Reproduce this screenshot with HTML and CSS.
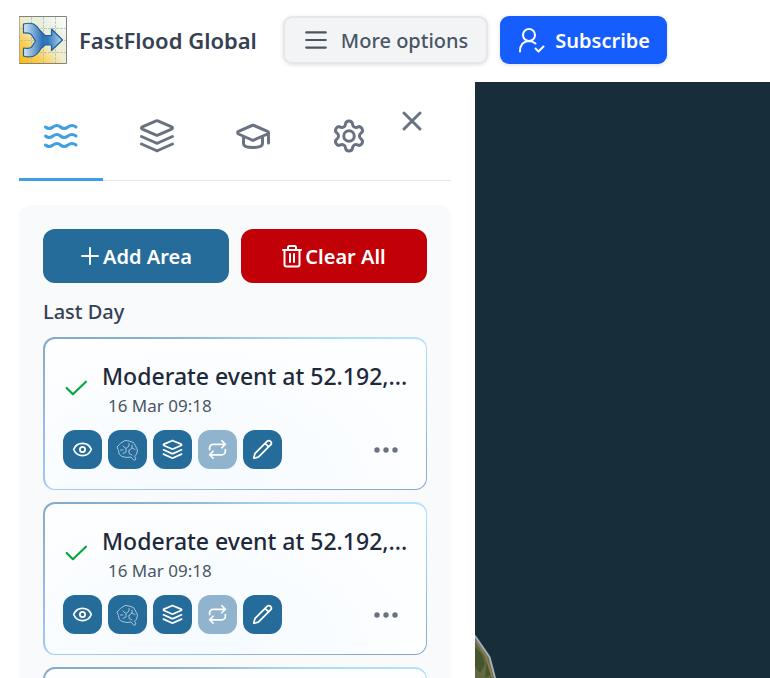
FILE: index.html
```html
<!DOCTYPE html>
<html lang="en">
<head>
<meta charset="utf-8">
<meta name="viewport" content="width=device-width, initial-scale=1">
<title>FastFlood Global</title>
<link rel="stylesheet" href="styles.css">
</head>
<body>
<svg class="sprite" aria-hidden="true">
  <symbol id="layers" viewBox="0 0 36 36"><path d="M17.2 2.900 3.300 8.800a1.300 1.300 0 0 0 0 2.400l13.900 5.900q.8.300 1.600 0l13.900-5.900a1.300 1.300 0 0 0 0-2.400L18.800 2.900q-.8-.3-1.600 0ZM2.500 18.500 17.200 25q.8.300 1.600 0l14.700-6.500M2.500 26l14.700 6.500q.8.300 1.600 0L33.500 26"/></symbol>
  <symbol id="check" viewBox="0 0 24 24"><path d="m3.500 10.500 6 6L22 4.500"/></symbol>
  <symbol id="eye" viewBox="0 0 24 24"><path d="M2.100 12.300a1 1 0 0 1 0-.7 10.750 10.750 0 0 1 19.800 0 1 1 0 0 1 0 .7 10.750 10.750 0 0 1-19.800 0Z"/><circle cx="12" cy="12" r="3"/></symbol>
  <symbol id="brain" viewBox="0 0 24 24"><path d="M5 5 9 2.500l4 .5 4.500 1.500 2 3.500 2 4-1 4.500-2 1.500 1.500 3-2 1.500-3-3.500-4 .5-5-1-3-2.500-.5-3.500L1 9l2-2ZM7 8l3 2.500V14l-3 1.500M10 10.500l3-2.500V5.500M16 7v3l-3 2.500M16 10l3 1.500M13 12.500v3l3 1.500M4.500 12H7"/></symbol>
  <symbol id="repeat" viewBox="0 0 24 24"><path d="m17 2 4 4-4 4M3 12v-2a4 4 0 0 1 4-4h14M7 22l-4-4 4-4M21 12v2a4 4 0 0 1-4 4H3"/></symbol>
  <symbol id="pencil" viewBox="0 0 24 24"><path d="M21.200 6.800a2.800 2.800 0 0 0-4-4L3.800 16.200a2 2 0 0 0-.5.800L2 21.400a.5.500 0 0 0 .6.600l4.400-1.300a2 2 0 0 0 .8-.5ZM15 5l4 4"/></symbol>
</svg>

<header class="topbar">
  <a class="brand" href="#">
    <svg class="logo" viewBox="0 0 48 48" aria-hidden="true">
      <defs>
        <linearGradient id="ground" x1="0" y1="1" x2="1" y2="0"><stop offset="0" stop-color="#fbb900"/><stop offset=".25" stop-color="#fbcd4e"/><stop offset=".5" stop-color="#f0edc9"/><stop offset=".7" stop-color="#e7f0e2"/><stop offset="1" stop-color="#fff"/></linearGradient>
        <linearGradient id="water"><stop offset="0" stop-color="#d5e8f7"/><stop offset=".48" stop-color="#2e73b7"/><stop offset=".62" stop-color="#2e78bd"/><stop offset="1" stop-color="#b5d6ed"/></linearGradient>
      </defs>
      <path d="M.5.500h47v47H.5Z" fill="url(#ground)" stroke="#85817f"/>
      <path d="M12.500 1v46M24.500 1v46M36.500 1v46M1 12.500h46M1 24.500h46M1 36.500h46" fill="none" stroke="#b5b5ad" stroke-opacity=".7" stroke-linecap="butt" stroke-dasharray="3 1"/>
      <path d="M4.500 8q6-1.500 10 0 4 2 6.500 6.500l5 5h6.500v-6.500L43.500 24 32.500 34.500V29H26l-4 3.500q-4 7-8.500 8-5 1-9-.500v-8q7 1 8.500-1.500l3.500-5.500-3.500-5.500q-1.500-3-8.500-2.500Z" fill="url(#water)" stroke="#235c9e" stroke-width="1.200" stroke-linejoin="round"/>
    </svg>
    <span>FastFlood Global</span>
  </a>
  <button class="btn more" type="button">
    <svg class="bars" viewBox="0 0 24 24" aria-hidden="true"><path d="M3 5h18M3 12h18M3 19h18"/></svg>
    More options
  </button>
  <button class="btn subscribe" type="button">
    <svg class="user" viewBox="0 0 28 28" aria-hidden="true"><circle cx="12" cy="9" r="6"/><path d="M3 25.500q0-10 9-10.500 3.500 0 6.500 2.500M18.500 22.500l3 3 5-5"/></svg>
    Subscribe
  </button>
</header>

<main class="workspace">
  <aside class="sidebar">
    <div class="sidebar-head">
      <nav class="tabs" aria-label="Sections">
        <button class="tab active" type="button" aria-label="Floods"><svg viewBox="0 0 36 36"><path d="M2.500 9q3.500 3 7.500 0t7.500 0 7.500 0 8 0M2.500 18q3.500 3 7.500 0t7.500 0 7.500 0 8 0M2.500 27q3.500 3 7.500 0t7.500 0 7.500 0 8 0"/></svg></button>
        <button class="tab" type="button" aria-label="Layers"><svg><use href="#layers"/></svg></button>
        <button class="tab" type="button" aria-label="Learn"><svg viewBox="0 0 36 36"><path d="M17 7.500 3.500 13.300a1.500 1.500 0 0 0 0 2.700L17 22q1 .4 2 0l13.500-6a1.500 1.500 0 0 0 0-2.700L19 7.500q-1-.4-2 0ZM33.500 14.500V25M8.500 19v6.500q0 4 9.500 4t9.500-4V19"/></svg></button>
        <button class="tab" type="button" aria-label="Settings"><svg viewBox="0 0 24 24"><path class="gear" d="M9.671 4.136a2.340 2.340 0 0 1 4.659 0 2.340 2.340 0 0 0 3.319 1.915 2.340 2.340 0 0 1 2.330 4.033 2.340 2.340 0 0 0 0 3.831 2.340 2.340 0 0 1-2.330 4.033 2.340 2.340 0 0 0-3.319 1.915 2.340 2.340 0 0 1-4.659 0 2.340 2.340 0 0 0-3.320-1.915 2.340 2.340 0 0 1-2.330-4.033 2.340 2.340 0 0 0 0-3.831A2.340 2.340 0 0 1 6.350 6.051a2.340 2.340 0 0 0 3.319-1.915"/><circle class="gear" cx="12" cy="12" r="3.500"/></svg></button>
      </nav>
      <button class="close" type="button" aria-label="Close"><svg viewBox="0 0 22 22"><path d="m3 3 16 16M19 3 3 19"/></svg></button>
    </div>

    <section class="panel">
      <div class="actions">
        <button class="action add" type="button"><svg class="plus" viewBox="0 0 20 20" aria-hidden="true"><path d="M10 2v16M2 10h16"/></svg>Add Area</button>
        <button class="action clear" type="button"><svg class="trash" viewBox="0 0 20 24" aria-hidden="true"><path d="M1 6h18M6 6V3.500Q6 2 7.500 2h5Q14 2 14 3.500V6M2.500 6v14.500Q2.500 22.500 4.500 22.500h11q2 0 2-2V6M8 10v8M12 10v8"/></svg>Clear All</button>
      </div>
      <h2>Last Day</h2>

      <article class="card">
        <div class="summary">
          <svg class="check" aria-label="Completed"><use href="#check"/></svg>
          <div class="caption"><h3>Moderate event at 52.192,...</h3><time>16 Mar 09:18</time></div>
        </div>
        <div class="tools">
          <button class="tool" type="button" aria-label="View"><svg><use href="#eye"/></svg></button>
          <button class="tool faint" type="button" aria-label="Analyse"><svg><use href="#brain"/></svg></button>
          <button class="tool stack" type="button" aria-label="Layers"><svg><use href="#layers"/></svg></button>
          <button class="tool" type="button" aria-label="Repeat" disabled><svg><use href="#repeat"/></svg></button>
          <button class="tool" type="button" aria-label="Edit"><svg><use href="#pencil"/></svg></button>
          <button class="menu" type="button" aria-label="More"><svg viewBox="0 0 24 6"><circle cx="3" cy="3" r="2.700"/><circle cx="12" cy="3" r="2.700"/><circle cx="21" cy="3" r="2.700"/></svg></button>
        </div>
      </article>

      <article class="card">
        <div class="summary">
          <svg class="check" aria-label="Completed"><use href="#check"/></svg>
          <div class="caption"><h3>Moderate event at 52.192,...</h3><time>16 Mar 09:18</time></div>
        </div>
        <div class="tools">
          <button class="tool" type="button" aria-label="View"><svg><use href="#eye"/></svg></button>
          <button class="tool faint" type="button" aria-label="Analyse"><svg><use href="#brain"/></svg></button>
          <button class="tool stack" type="button" aria-label="Layers"><svg><use href="#layers"/></svg></button>
          <button class="tool" type="button" aria-label="Repeat" disabled><svg><use href="#repeat"/></svg></button>
          <button class="tool" type="button" aria-label="Edit"><svg><use href="#pencil"/></svg></button>
          <button class="menu" type="button" aria-label="More"><svg viewBox="0 0 24 6"><circle cx="3" cy="3" r="2.700"/><circle cx="12" cy="3" r="2.700"/><circle cx="21" cy="3" r="2.700"/></svg></button>
        </div>
      </article>

      <article class="card next"></article>
    </section>
  </aside>
  <div class="map" role="img" aria-label="Map">
    <svg class="coast" viewBox="0 0 24 44" aria-hidden="true"><path d="M0 3 14 23 20 44H0Z" fill="#62683f" stroke="none"/><path d="M0 13l7 7 3 10-5 9-5-6ZM12 28l5 12-7 4Z" fill="#45562e" stroke="none"/><path d="m1 7 10 15 6 20" fill="none" stroke="#8b7a52" stroke-width="2"/><path d="m0 2 14.500 21L20 44" fill="none" stroke="#a4b0b7" stroke-width="2"/></svg>
  </div>
</main>
</body>
</html>
```
FILE: styles.css
```css
* { box-sizing: border-box; }

body {
  margin: 0;
  height: 100vh;
  display: flex;
  flex-direction: column;
  overflow: hidden;
  background: #fff;
  color: #364153;
  font-family: "Noto Sans", "Open Sans", sans-serif;
}

button { font: inherit; border: 0; padding: 0; background: none; cursor: pointer; }
svg { display: block; flex: none; fill: none; stroke: currentColor; stroke-linecap: round; stroke-linejoin: round; }
h2, h3 { margin: 0; }
.sprite { display: none; }

.topbar { display: flex; align-items: flex-start; gap: 12px; height: 82px; flex: none; padding: 16px 19px; white-space: nowrap; }
.brand { display: flex; align-items: center; gap: 12px; height: 48px; margin-right: 14px; color: inherit; text-decoration: none; font-size: 22px; font-weight: 600; line-height: 32px; }
.logo { width: 48px; height: 48px; }
.btn { display: flex; align-items: center; gap: 12px; height: 48px; padding: 0 18px; border-radius: 9px; font-size: 20px; font-weight: 500; box-shadow: 0 1px 4px #0000001f; }
.more { border: 2px solid #e5e7eb; background: #f3f4f6; color: #4a5565; }
.bars { width: 26px; height: 26px; stroke-width: 2; }
.subscribe { gap: 10px; padding: 0 17px; background: #155dfc; color: #fff; font-weight: 600; }
.user { width: 28px; height: 28px; stroke-width: 2; }

.workspace { display: flex; flex: 1; min-height: 0; }
.sidebar { width: 475px; flex: none; padding: 0 24px 0 19px; overflow: hidden; }
.sidebar-head { display: flex; align-items: flex-start; height: 99px; border-bottom: 1px solid #e5e7eb; }
.tabs { display: flex; gap: 12px; }
.tab { display: grid; justify-items: center; align-content: start; width: 84px; height: 99px; padding-top: 36px; border-bottom: 3px solid transparent; color: #6a7282; }
.tab.active { border-color: #3f9fe3; color: #3f9fe3; }
.tab svg { width: 36px; height: 36px; stroke-width: 3; }
.tab .gear { stroke-width: 2; }
.close { display: grid; place-items: center; margin: 28px 0 0 10px; color: #6a7282; }
.close svg { width: 22px; height: 22px; stroke-width: 3; }

.panel { margin-top: 24px; padding: 24px; border-radius: 12px; background: #f8fafc; }
.actions { display: flex; gap: 12px; }
.action { display: flex; flex: 1; align-items: center; justify-content: center; gap: 3px; height: 54px; border-radius: 12px; color: #fff; font-size: 20px; font-weight: 600; }
.add { background: #256c9a; }
.clear { background: #c10007; }
.plus { width: 20px; height: 20px; stroke-width: 2; }
.trash { width: 20px; height: 24px; stroke-width: 2; }
h2 { padding: 14px 0 10px; font-size: 20px; font-weight: 500; line-height: 30px; }

.card {
  margin-bottom: 12px;
  padding: 20px 20px 20px 18px;
  border: 1px solid transparent;
  border-width: 2px 1px 1px 2px;
  border-radius: 12px;
  background:
    radial-gradient(ellipse at 40% 90%, #f6fbff 10%, #fdfeff 75%) padding-box,
    conic-gradient(from 68deg, #b5e2fa 0deg, #86a8ca 44deg, #a4caf5 180deg, #82aacb 224deg, #b5e2fa 360deg) border-box;
}
.next { min-height: 153px; }
.summary { display: flex; align-items: center; gap: 14px; }
.check { width: 25px; height: 25px; color: #00a63e; stroke-width: 2; }
.caption { flex: 1; min-width: 0; white-space: nowrap; }
h3 { color: #1e2939; font-size: 23px; font-weight: 500; line-height: 34px; }
time { display: block; padding-left: 6px; color: #4a5565; font-size: 17px; line-height: 26px; }
.tools { display: flex; align-items: center; gap: 6px; margin-top: 11px; }
.tool { display: grid; place-items: center; width: 39px; height: 39px; border-radius: 12px; background: #256c9a; color: #fff; }
.tool svg { width: 21px; height: 21px; stroke-width: 2; }
.tool.stack svg { stroke-width: 3; }
.tool.faint svg { width: 24px; height: 24px; stroke-width: 1; opacity: .6; }
.tool:disabled { background: #90b4cd; }
.menu { margin-left: auto; padding: 8px; color: #6a7282; }
.menu svg { width: 24px; height: 6px; fill: currentColor; stroke: none; }

.map { display: flex; align-items: flex-end; flex: 1; overflow: hidden; background: #182d3a; }
.coast { width: 24px; height: 44px; }
```
